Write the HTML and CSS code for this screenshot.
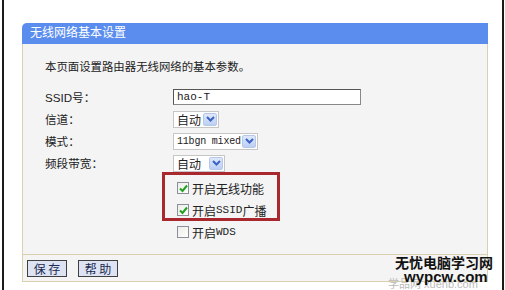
FILE: index.html
```html
<!DOCTYPE html>
<html lang="zh-CN">
<head>
    <meta charset="UTF-8">
    <meta name="viewport" content="width=device-width, initial-scale=1.0">
    <title>无线网络基本设置</title>
    <link rel="stylesheet" href="styles.css">
</head>
<body>
    <div class="screen">
        <div class="panel">
            <div class="panel-title">无线网络基本设置</div>

            <div class="panel-body">
                <p class="intro">本页面设置路由器无线网络的基本参数。</p>

                <div class="form-rows">
                    <div class="row">
                        <span class="label">SSID号：</span>
                        <span class="text-input">hao-T</span>
                    </div>
                    <div class="row">
                        <span class="label">信道：</span>
                        <span class="select select-channel">
                            <span class="select-value">自动</span>
                            <span class="select-arrow"><svg width="9" height="6" viewBox="0 0 9 6"><path d="M1 1 L4.5 4.5 L8 1" fill="none" stroke="#3b62c4" stroke-width="2"/></svg></span>
                        </span>
                    </div>
                    <div class="row">
                        <span class="label">模式：</span>
                        <span class="select select-mode">
                            <span class="select-value mono">11bgn mixed</span>
                            <span class="select-arrow"><svg width="9" height="6" viewBox="0 0 9 6"><path d="M1 1 L4.5 4.5 L8 1" fill="none" stroke="#3b62c4" stroke-width="2"/></svg></span>
                        </span>
                    </div>
                    <div class="row">
                        <span class="label">频段带宽：</span>
                        <span class="select select-band">
                            <span class="select-value">自动</span>
                            <span class="select-arrow"><svg width="9" height="6" viewBox="0 0 9 6"><path d="M1 1 L4.5 4.5 L8 1" fill="none" stroke="#3b62c4" stroke-width="2"/></svg></span>
                        </span>
                    </div>
                </div>

                <div class="options">
                    <div class="highlight">
                        <div class="check">
                            <span class="box"><svg width="9" height="9" viewBox="0 0 9 9"><path d="M1 4.5 L3.5 7 L8 1.5" fill="none" stroke="#21a121" stroke-width="2"/></svg></span>
                            开启无线功能
                        </div>
                        <div class="check">
                            <span class="box"><svg width="9" height="9" viewBox="0 0 9 9"><path d="M1 4.5 L3.5 7 L8 1.5" fill="none" stroke="#21a121" stroke-width="2"/></svg></span>
                            开启<span class="mono mono-lg">SSID</span>广播
                        </div>
                    </div>
                    <div class="check check-plain">
                        <span class="box"></span>
                        开启<span class="mono mono-lg">WDS</span>
                    </div>
                </div>
            </div>

            <div class="panel-foot">
                <button class="btn">保 存</button>
                <button class="btn">帮 助</button>
            </div>
        </div>

        <!-- site watermark over the corner -->
        <div class="watermark">
            <div class="wm-back">学品网 xuenb.com</div>
            <div class="wm-name">无忧电脑学习网</div>
            <div class="wm-url">wypcw.com</div>
        </div>
    </div>
</body>
</html>
```

FILE: styles.css
```css
/* General */
body {
    margin: 0;
    padding: 0;
    background: #fff;
    font-family: "Liberation Sans", "Noto Sans CJK SC", sans-serif;
    font-size: 12px;
    color: #222;
}

.screen {
    position: relative;
    height: 290px;
    margin: 0 1px 0 2px;
    border-left: 2px solid #1a1a1a;
    border-right: 2px solid #1a1a1a;
    padding-top: 23px;
    box-sizing: border-box;
    overflow: hidden;
}

/* Panel */
.panel {
    margin-left: 18px;
    width: 464px;
    background: #f4f4f4;
    border: 1px solid #d9d0ad;
    border-top: none;
    border-radius: 5px 0 0 0;
}

.panel-title {
    height: 21px;
    line-height: 21px;
    padding-left: 8px;
    background: #5b8def;
    color: #fff;
    border-radius: 5px 0 0 0;
    margin: 0 -1px;
}

.panel-body {
    padding: 16px 0 12px 22px;
}

.intro {
    margin: 0;
    line-height: 14px;
    font-size: 11.4px;
}

/* Form rows */
.form-rows {
    margin-top: 12px;
}

.row {
    display: flex;
    align-items: center;
    height: 22px;
}

.label {
    width: 128px;
    font-size: 11.6px;
}

.mono {
    font-family: "Liberation Mono", "Noto Sans CJK SC", monospace;
    font-size: 10px;
    letter-spacing: -0.2px;
    white-space: nowrap;
}

.mono-lg {
    font-size: 11px;
    letter-spacing: 0;
}

.text-input {
    display: block;
    width: 180px;
    height: 14px;
    line-height: 14px;
    padding: 0 3px;
    background: #fff;
    border: 1px solid #888;
    border-top-color: #555;
    border-left-color: #555;
    font-family: "Liberation Mono", monospace;
    font-size: 11px;
}

.select {
    display: flex;
    align-items: center;
    height: 17px;
    background: #fff;
    border: 1px solid #c6c6c6;
    box-sizing: border-box;
    padding: 0 1px 0 3px;
}

.select-channel { width: 46px; }
.select-band { width: 52px; }
.select-mode { width: 85px; }

.select-value {
    flex: 1;
}

.select-arrow {
    display: flex;
    align-items: center;
    justify-content: center;
    flex: none;
    width: 14px;
    height: 13px;
    background: linear-gradient(#dfe8fb, #bccff3);
    border: 1px solid #b7c7e8;
    box-sizing: border-box;
    border-radius: 2px;
}

/* Checkboxes */
.options {
    margin: -2px 0 0 117px;
}

.highlight {
    width: 118px;
    height: 49px;
    box-sizing: border-box;
    border: 3px solid #a8282e;
    padding: 3px 0 0 12px;
}

.check {
    display: flex;
    align-items: center;
    height: 20px;
    margin-bottom: 2px;
    white-space: nowrap;
}

.check-plain {
    margin: 1px 0 0 15px;
}

.box {
    display: inline-flex;
    align-items: center;
    justify-content: center;
    width: 12px;
    height: 12px;
    margin-right: 3px;
    box-sizing: border-box;
    border: 1px solid #8a8f9a;
    background: linear-gradient(135deg, #eceee8, #fff);
}

/* Footer */
.panel-foot {
    display: flex;
    gap: 11px;
    padding: 5px 4px 4px;
    border-top: 1px solid #d9d0ad;
}

.btn {
    width: 40px;
    height: 17px;
    padding: 0;
    background: #dde3f3;
    border: 1px solid #404040;
    font-family: "Noto Sans CJK SC", sans-serif;
    font-size: 12px;
    line-height: 14px;
    color: #1a2a50;
}

/* Watermark */
.watermark {
    position: absolute;
    left: 378px;
    top: 254px;
    width: 125px;
}

.wm-back {
    position: absolute;
    left: 6px;
    top: 25px;
    color: #bbb;
    font-size: 11px;
    line-height: 11px;
}

.wm-name {
    position: relative;
    margin-left: 13px;
    font-family: "Noto Sans CJK SC", sans-serif;
    font-weight: bold;
    font-size: 14px;
    line-height: 16px;
    color: #111;
}

.wm-url {
    position: relative;
    margin-left: 22px;
    font-weight: bold;
    font-size: 15px;
    line-height: 14px;
    color: #111;
}
```
